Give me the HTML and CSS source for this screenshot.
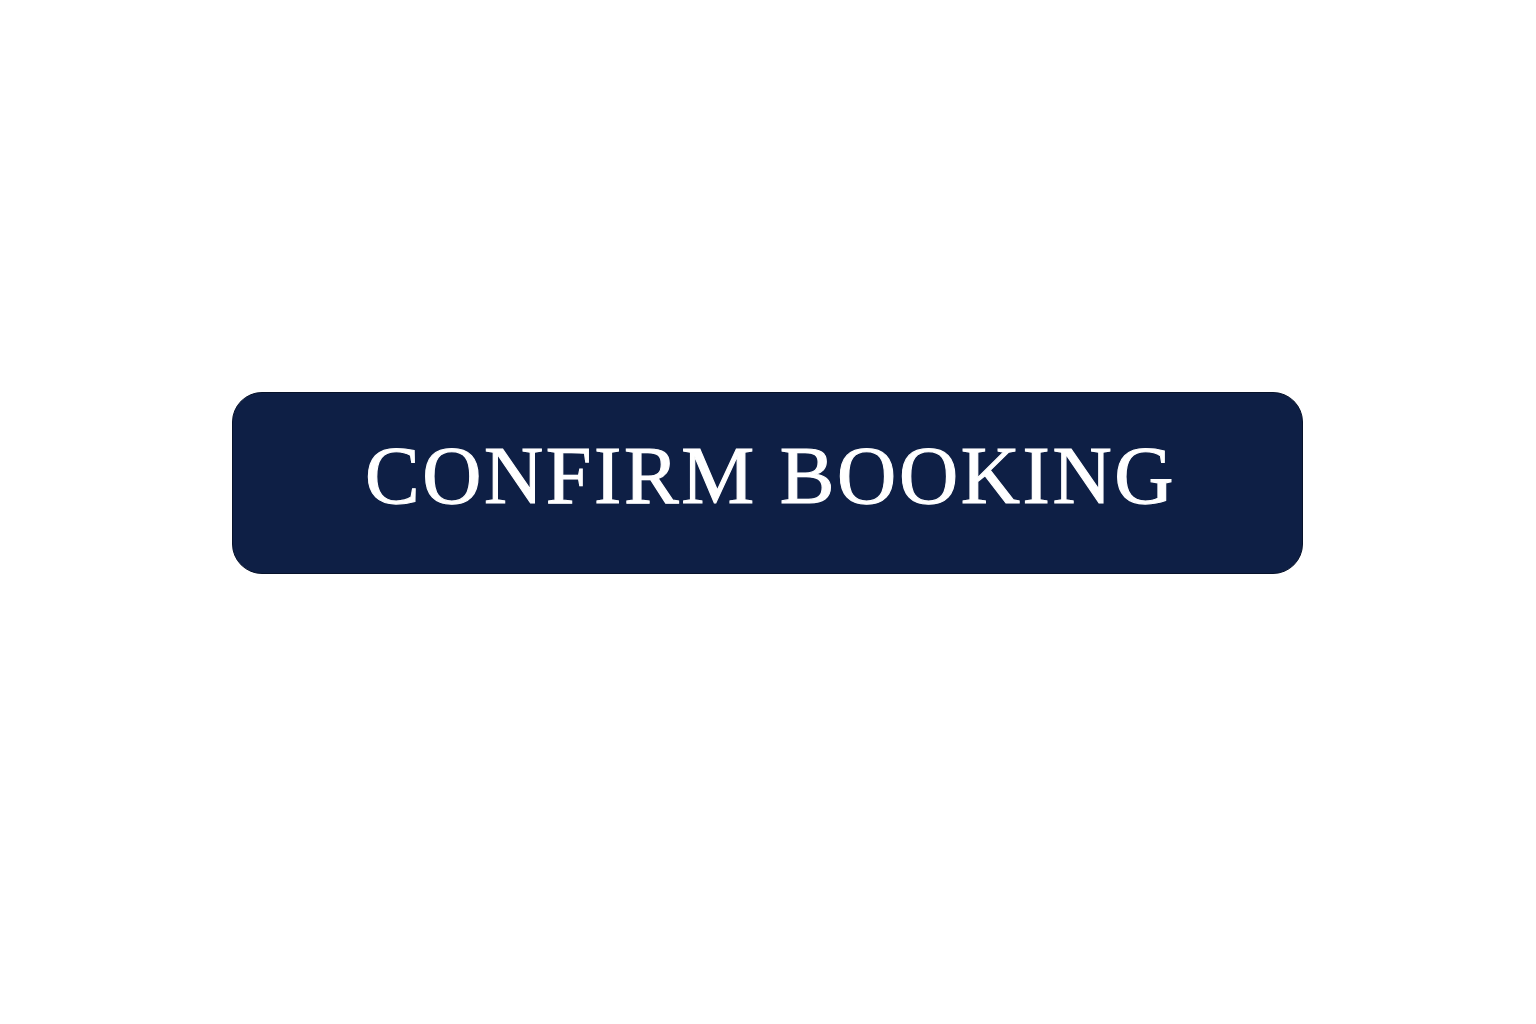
FILE: index.html
```html
<!DOCTYPE html>
<html lang="en">
<head>
<meta charset="utf-8">
<title>Confirm booking</title>
<link rel="stylesheet" href="styles.css">
</head>
<body>
  <main class="stage">
    <button class="confirm-btn" type="button">CONFIRM BOOKING</button>
  </main>
</body>
</html>
```

FILE: styles.css
```css
html, body {
  margin: 0;
  padding: 0;
  background: #ffffff;
}

.stage {
  width: 1536px;
  height: 1024px;
  box-sizing: border-box;
  padding-top: 392px;
  display: flex;
  justify-content: center;
  align-items: flex-start;
}

.confirm-btn {
  width: 1071px;
  height: 182px;
  box-sizing: border-box;
  margin-left: -1px;
  border: 1.5px solid #07122a;
  border-radius: 30px;
  background: #0e1f45;
  color: #ffffff;
  font-family: "Liberation Serif", "Times New Roman", serif;
  font-size: 82px;
  font-weight: 400;
  letter-spacing: 2.6px;
  -webkit-text-stroke: 1.1px #ffffff;
  line-height: 1;
  padding: 0 0 14px 6px;
  cursor: pointer;
}
```
